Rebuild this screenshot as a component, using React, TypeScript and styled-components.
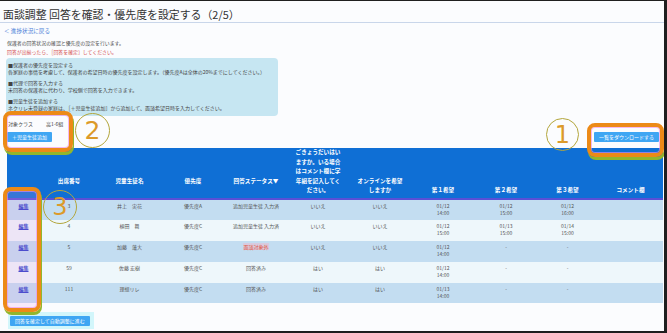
import styled, { createGlobalStyle } from 'styled-components';

const GlobalStyle = createGlobalStyle`
	html, body {
		margin: 0;
		padding: 0;
		background: #1f1f1f;
	}
	body {
		font-family: "Noto Sans CJK JP", "Noto Sans", sans-serif;
	}
`;

const COL_WIDTHS = [33, 58, 63, 64, 62, 62, 62, 64, 62, 61, 65];

type Row = {
	no: string;
	name: string;
	priority: string;
	status: string;
	statusAlert?: boolean;
	sibling: string;
	online: string;
	wishes: [string, string][];
};

const ROWS: Row[] = [
	{
		no: '3',
		name: '井上　実花',
		priority: '優先度A',
		status: '追加児童生徒 入力済',
		sibling: 'いいえ',
		online: 'いいえ',
		wishes: [
			['01/12', '14:00'],
			['01/12', '15:00'],
			['01/12', '16:00'],
		],
	},
	{
		no: '4',
		name: '植田　舞',
		priority: '優先度C',
		status: '追加児童生徒 入力済',
		sibling: 'いいえ',
		online: 'いいえ',
		wishes: [
			['01/12', '15:00'],
			['01/13', '15:00'],
			['01/14', '15:00'],
		],
	},
	{
		no: '5',
		name: '加藤　蓮大',
		priority: '優先度C',
		status: '面談対象外',
		statusAlert: true,
		sibling: 'いいえ',
		online: 'いいえ',
		wishes: [['01/12', '14:00'], ['-', ''], ['-', '']],
	},
	{
		no: '59',
		name: '佐藤 宏樹',
		priority: '優先度C',
		status: '回答済み',
		sibling: 'はい',
		online: 'はい',
		wishes: [['01/12', '14:00'], ['-', ''], ['-', '']],
	},
	{
		no: '111',
		name: '理想リレ',
		priority: '優先度C',
		status: '回答済み',
		sibling: 'はい',
		online: 'はい',
		wishes: [['01/13', '14:00'], ['-', ''], ['-', '']],
	},
];

const App = () => {
	return (
		<>
			<GlobalStyle />
			<Frame>
				<Title>面談調整 回答を確認・優先度を設定する（2/5）</Title>
				<BackLink>＜ 進捗状況に戻る</BackLink>
				<Intro>
					<p>保護者の回答状況の確認と優先度の設定を行います。</p>
					<p className="alert">回答が出揃ったら、［回答を確定］してください。</p>
				</Intro>
				<InfoBox>
					<InfoSection>
						<p>■保護者の優先度を設定する</p>
						<p>各家庭の事情を考慮して、保護者の希望日時の優先度を設定します。（優先度Aは全体の20%までにしてください。）</p>
					</InfoSection>
					<InfoSection>
						<p>■代理で回答を入力する</p>
						<p>未回答の保護者に代わり、学校側で回答を入力できます。</p>
					</InfoSection>
					<InfoSection>
						<p>■児童生徒を追加する</p>
						<p>ネクリレ未登録の家庭は、［＋児童生徒追加］から追加して、面談希望日時を入力してください。</p>
					</InfoSection>
				</InfoBox>
				<Toolbar>
					<ToolbarLeft>
						<ClassRow>
							<span>対象クラス</span>
							<ClassValue>高1-6組</ClassValue>
						</ClassRow>
						<BlueButton>＋児童生徒追加</BlueButton>
					</ToolbarLeft>
					<BlueButton>一覧をダウンロードする</BlueButton>
				</Toolbar>
				<Table>
					<colgroup>
						{COL_WIDTHS.map((w, i) => (
							<col key={i} style={{ width: w }} />
						))}
					</colgroup>
					<thead>
						<tr>
							<Th $raised />
							<Th $raised>出席番号</Th>
							<Th $raised>児童生徒名</Th>
							<Th $raised>優先度</Th>
							<Th $raised>回答ステータス▼</Th>
							<Th>
								ごきょうだいはい
								<br />
								ますか。いる場合
								<br />
								はコメント欄に学
								<br />
								年組を記入してく
								<br />
								ださい。
							</Th>
							<Th>
								オンラインを希望
								<br />
								しますか
							</Th>
							<Th>第１希望</Th>
							<Th>第２希望</Th>
							<Th>第３希望</Th>
							<Th>コメント欄</Th>
						</tr>
					</thead>
					<tbody>
						{ROWS.map((row, i) => (
							<Tr key={row.no} $striped={i % 2 === 0}>
								<Td>
									<EditLink>編集</EditLink>
								</Td>
								<Td>{row.no}</Td>
								<Td>{row.name}</Td>
								<Td>{row.priority}</Td>
								<Td>
									<Status $alert={row.statusAlert}>{row.status}</Status>
								</Td>
								<Td>{row.sibling}</Td>
								<Td>{row.online}</Td>
								{row.wishes.map(([d, t], j) => (
									<Td key={j}>
										{d}
										{t && (
											<>
												<br />
												{t}
											</>
										)}
									</Td>
								))}
								<Td />
							</Tr>
						))}
					</tbody>
				</Table>
				<FooterHighlight>
					<BlueButton>回答を確定して自動調整に進む</BlueButton>
				</FooterHighlight>

				<MarkBox $left={3} $top={110} $width={70} $height={41} />
				<MarkCircle $left={75} $top={112} $size={35}>2</MarkCircle>
				<MarkBox $left={587} $top={122} $width={77} $height={34} />
				<MarkCircle $left={546} $top={117} $size={33}>1</MarkCircle>
				<MarkBox $left={3} $top={186} $width={38} $height={125} $tint />
				<MarkCircle $left={43} $top={189} $size={34}>3</MarkCircle>
			</Frame>
		</>
	);
};

const Frame = styled.div`
	position: relative;
	width: 664px;
	height: 330px;
	margin-top: 1px;
	background: #fbfcfe;
	overflow: hidden;
	color: #4a4a4a;

	p {
		margin: 0;
	}
`;

const Title = styled.h1`
	margin: 0;
	padding: 6px 0 0 3px;
	font-size: 10.9px;
	line-height: 15px;
	font-weight: 400;
	color: #333;
	border-bottom: 1px solid #c9d6ea;
`;

const BackLink = styled.div`
	margin-top: 4px;
	padding-left: 4px;
	font-size: 5.6px;
	line-height: 8px;
	color: #4a7fd8;
`;

const Intro = styled.div`
	margin-top: 4px;
	padding-left: 7px;
	font-size: 4.9px;
	line-height: 8.5px;

	.alert {
		color: #d44c4c;
	}
`;

const InfoBox = styled.div`
	margin: 2px 0 0 6px;
	width: 272px;
	box-sizing: border-box;
	padding: 2.5px 2px 5.5px;
	background: #c6e6f2;
	border-radius: 4px;
	font-size: 5px;
	line-height: 7px;
	color: #444;
	display: flex;
	flex-direction: column;
	gap: 4px;
`;

const InfoSection = styled.div``;

const Toolbar = styled.div`
	display: flex;
	justify-content: space-between;
	align-items: flex-end;
	padding: 0 5px 0 7px;
`;

const ToolbarLeft = styled.div`
	display: flex;
	flex-direction: column;
	align-items: flex-start;
	gap: 5.5px;
`;

const ClassRow = styled.div`
	margin-top: 3.5px;
	padding-left: 1px;
	font-size: 5px;
	line-height: 7px;
	color: #444;
`;

const ClassValue = styled.span`
	margin-left: 13px;
`;

const BlueButton = styled.button`
	border: none;
	margin: 0;
	padding: 0 5px;
	height: 10px;
	background: #3fa6f3;
	color: #fff;
	font-family: inherit;
	font-size: 5px;
	line-height: 10px;
	border-radius: 1px;
`;

const Table = styled.table`
	margin: 5.5px 0 0 7px;
	width: 656px;
	table-layout: fixed;
	border-collapse: separate;
	border-spacing: 0;
`;

const Th = styled.th<{ $raised?: boolean }>`
	box-sizing: border-box;
	height: 52px;
	padding: 0 2px ${(p) => (p.$raised ? '11.5px' : '2px')};
	background: #0f6fd5;
	border-bottom: 2px solid #5a4fd6;
	color: #fff;
	font-size: 5.6px;
	line-height: 9.5px;
	font-weight: 700;
	vertical-align: bottom;
	text-align: center;
	white-space: nowrap;
`;

const Tr = styled.tr<{ $striped: boolean }>`
	background: ${(p) => (p.$striped ? '#c3ddf1' : '#eef7fb')};
`;

const Td = styled.td`
	box-sizing: border-box;
	height: 20.8px;
	padding: 2px 2px 0;
	vertical-align: top;
	text-align: center;
	font-size: 5px;
	line-height: 7px;
	color: #555;
	white-space: nowrap;
`;

const EditLink = styled.span`
	color: #2a3cc8;
	font-weight: 700;
	text-decoration: underline;
`;

const Status = styled.span<{ $alert?: boolean }>`
	color: ${(p) => (p.$alert ? '#e2553c' : 'inherit')};
	background: ${(p) => (p.$alert ? 'rgba(255, 170, 190, 0.35)' : 'transparent')};
`;

const FooterHighlight = styled.div`
	display: inline-flex;
	margin: 9px 0 0 8px;
	padding: 4px 4px 3px 2px;
	background: #d2f6fb;
`;

const MarkBox = styled.div<{
	$left: number;
	$top: number;
	$width: number;
	$height: number;
	$tint?: boolean;
}>`
	position: absolute;
	left: ${(p) => p.$left}px;
	top: ${(p) => p.$top}px;
	width: ${(p) => p.$width}px;
	height: ${(p) => p.$height}px;
	box-sizing: border-box;
	border: 4px solid #ec8a17;
	border-radius: 8px;
	background: ${(p) => (p.$tint ? 'rgba(235, 150, 230, 0.18)' : 'transparent')};
	box-shadow: 1px 3px 0 0 #92b62c, inset 0 0 0 1px rgba(240, 140, 230, 0.6);
	pointer-events: none;
`;

const MarkCircle = styled.div<{ $left: number; $top: number; $size: number }>`
	position: absolute;
	left: ${(p) => p.$left}px;
	top: ${(p) => p.$top}px;
	width: ${(p) => p.$size}px;
	height: ${(p) => p.$size}px;
	box-sizing: border-box;
	border: 1.5px solid #b3a63c;
	border-radius: 50%;
	display: flex;
	align-items: center;
	justify-content: center;
	font-family: "DejaVu Sans", sans-serif;
	font-size: ${(p) => Math.round(p.$size * 0.72)}px;
	line-height: 1;
	color: #dc9a2a;
	pointer-events: none;
`;

export default App;
